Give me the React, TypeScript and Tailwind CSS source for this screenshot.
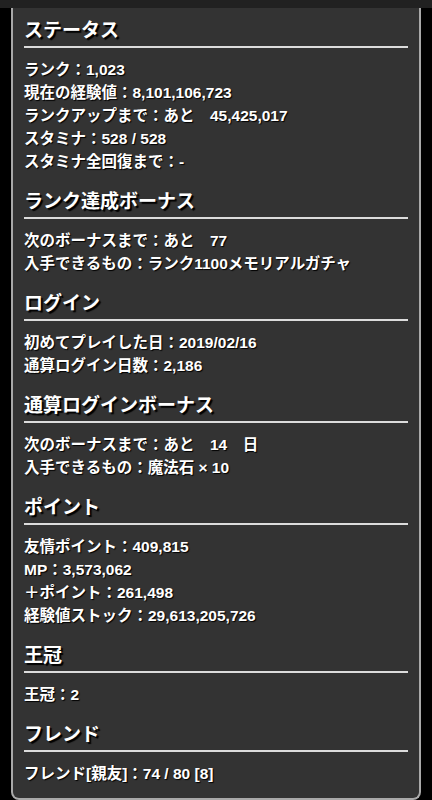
import React from 'react';

type Section = { title: string; rows: string[] };

const sections: Section[] = [
  {
    title: 'ステータス',
    rows: [
      'ランク：1,023',
      '現在の経験値：8,101,106,723',
      'ランクアップまで：あと　45,425,017',
      'スタミナ：528 / 528',
      'スタミナ全回復まで：-',
    ],
  },
  {
    title: 'ランク達成ボーナス',
    rows: ['次のボーナスまで：あと　77', '入手できるもの：ランク1100メモリアルガチャ'],
  },
  {
    title: 'ログイン',
    rows: ['初めてプレイした日：2019/02/16', '通算ログイン日数：2,186'],
  },
  {
    title: '通算ログインボーナス',
    rows: ['次のボーナスまで：あと　14　日', '入手できるもの：魔法石 × 10'],
  },
  {
    title: 'ポイント',
    rows: ['友情ポイント：409,815', 'MP：3,573,062', '＋ポイント：261,498', '経験値ストック：29,613,205,726'],
  },
  {
    title: '王冠',
    rows: ['王冠：2'],
  },
  {
    title: 'フレンド',
    rows: ['フレンド[親友]：74 / 80 [8]'],
  },
];

export default function App() {
  return (
    <div className="min-h-screen bg-black font-['Liberation_Sans','Noto_Sans_CJK_JP',sans-serif] font-bold text-white">
      <div className="h-[8px] bg-[#212121]" />
      <div className="mx-[11px] h-[792px] overflow-hidden rounded-b-[8px] border-x-2 border-b-2 border-[#a9a9a9] bg-[#333333] px-[11px]">
        {sections.map((s) => (
          <section key={s.title} className="pt-[10px] pb-[6px]">
            <h2 className="border-b-2 border-[#dcdcdc] pb-[2px] text-[19px] leading-[26px] [text-shadow:2px_2px_1px_#000]">
              {s.title}
            </h2>
            <ul className="mt-[10px]">
              {s.rows.map((r) => (
                <li key={r} className="text-[15.5px] leading-[23px] whitespace-pre [text-shadow:1px_1px_1px_#000]">
                  {r}
                </li>
              ))}
            </ul>
          </section>
        ))}
      </div>
    </div>
  );
}
